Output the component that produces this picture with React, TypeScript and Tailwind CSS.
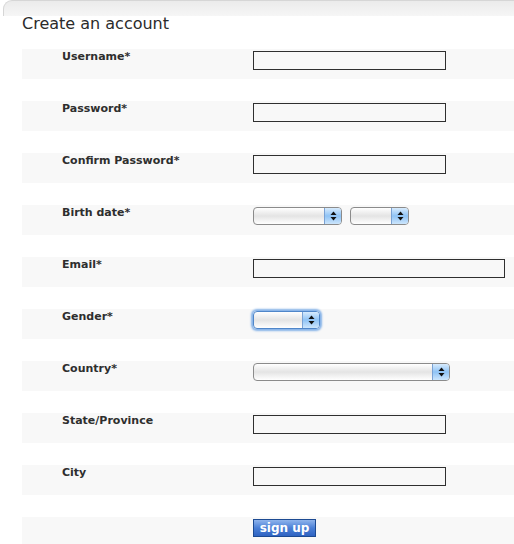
import React from 'react';

const font = { fontFamily: '"DejaVu Sans", Verdana, sans-serif' };

function TextBox({ width }: { width: string }) {
  return (
    <input
      type="text"
      className={`mt-[2px] h-[19px] ${width} border border-[#2f2f2f] bg-transparent outline-none`}
    />
  );
}

function Select({ width, focused }: { width: string; focused?: boolean }) {
  return (
    <div
      className={`relative flex h-[18px] ${width} overflow-hidden rounded-[4px] border ${
        focused
          ? 'border-[#4f86c9] shadow-[0_0_2px_2px_#86b3e8]'
          : 'border-[#8b8b8b]'
      } bg-gradient-to-b from-[#ffffff] via-[#e4e4e4] to-[#ffffff]`}
    >
      <div className="flex-1" />
      <div className="flex w-[17px] items-center justify-center border-l border-[#7aa2d4] bg-gradient-to-b from-[#d7ebfd] via-[#8fc3f5] to-[#cde6fc]">
        <svg width="7" height="10" viewBox="0 0 7 10">
          <path d="M3.5 0.5 L6.5 4 L0.5 4 Z" fill="#111" />
          <path d="M3.5 9.5 L6.5 6 L0.5 6 Z" fill="#111" />
        </svg>
      </div>
    </div>
  );
}

function Row({ label, children }: { label: string; children?: React.ReactNode }) {
  return (
    <div className="grid h-[30px] grid-cols-[231px_1fr] bg-[#f8f8f8]">
      <label className="pl-[40px] pt-[1px] text-[11px] font-bold leading-[13px] text-[#2e2e2e]">
        {label}
      </label>
      <div className="flex items-start">{children}</div>
    </div>
  );
}

export default function App() {
  return (
    <div className="h-[544px] w-[514px] overflow-hidden bg-white" style={font}>
      <div className="ml-[3px] h-[16px] rounded-tl-[9px] border-l border-t border-[#d6d6d6] bg-gradient-to-b from-[#ebebeb] to-[#f6f6f6]" />
      <h1 className="h-[33px] pl-[22px] text-[16px] font-normal leading-[16px] text-[#2b2b2b]">
        Create an account
      </h1>
      <div className="ml-[22px] flex flex-col gap-[22px]">
        <Row label="Username*">
          <TextBox width="w-[193px]" />
        </Row>
        <Row label="Password*">
          <TextBox width="w-[193px]" />
        </Row>
        <Row label="Confirm Password*">
          <TextBox width="w-[193px]" />
        </Row>
        <Row label="Birth date*">
          <div className="mt-[2px] flex gap-[8px]">
            <Select width="w-[89px]" />
            <Select width="w-[59px]" />
          </div>
        </Row>
        <Row label="Email*">
          <TextBox width="w-[252px]" />
        </Row>
        <Row label="Gender*">
          <div className="mt-[2px]">
            <Select width="w-[67px]" focused />
          </div>
        </Row>
        <Row label="Country*">
          <div className="mt-[2px]">
            <Select width="w-[197px]" />
          </div>
        </Row>
        <Row label="State/Province">
          <TextBox width="w-[193px]" />
        </Row>
        <Row label="City">
          <TextBox width="w-[193px]" />
        </Row>
        <Row label="">
          <button
            type="button"
            className="mt-[2px] h-[18px] w-[63px] border border-[#1c4a92] bg-gradient-to-b from-[#8fb4ec] via-[#4a7fd6] to-[#2f63c2] text-[12px] font-bold leading-[15px] text-white"
          >
            sign up
          </button>
        </Row>
      </div>
    </div>
  );
}
